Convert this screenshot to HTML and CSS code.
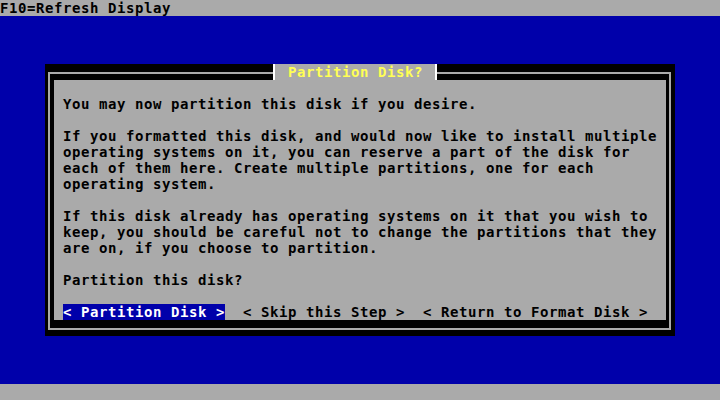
FILE: index.html
```html
<!DOCTYPE html>
<html>
<head>
<meta charset="utf-8">
<link rel="stylesheet" href="styles.css">
</head>
<body>
<div class="screen">
  <div class="bar">F10=Refresh Display</div>
  <div class="desk">
    <div class="dialog">
      <div class="title">Partition Disk?</div>
      <div class="frame">
        <div class="panel">
          <p class="para">You may now partition this disk if you desire.</p>
          <p class="para">If you formatted this disk, and would now like to install multiple
operating systems on it, you can reserve a part of the disk for
each of them here. Create multiple partitions, one for each
operating system.</p>
          <p class="para">If this disk already has operating systems on it that you wish to
keep, you should be careful not to change the partitions that they
are on, if you choose to partition.</p>
          <p class="para">Partition this disk?</p>
          <div class="buttons">
            <span class="btn active">&lt; Partition Disk &gt;</span>
            <span class="btn">&lt; Skip this Step &gt;</span>
            <span class="btn">&lt; Return to Format Disk &gt;</span>
          </div>
        </div>
      </div>
    </div>
  </div>
  <div class="bar"></div>
</div>
</body>
</html>
```
FILE: styles.css
```css
html, body {
  margin: 0;
  padding: 0;
  background: #0000aa;
}
.screen {
  width: 720px;
  height: 400px;
  font-family: "DejaVu Sans Mono", "Liberation Mono", monospace;
  font-weight: bold;
  font-size: 14px;
  letter-spacing: 0.57px;
  line-height: 16px;
  color: #000;
}
.bar {
  height: 16px;
  background: #aaaaaa;
  color: #000;
  white-space: pre;
}
.desk {
  height: 368px;
  box-sizing: border-box;
  background: #0000aa;
  padding: 48px 0 0 45px;
}
.dialog {
  position: relative;
  width: 630px;
  height: 272px;
  box-sizing: border-box;
  background: #000;
  padding: 8px 4px 6px 3px;
}
.frame {
  height: 100%;
  box-sizing: border-box;
  border: 2px solid #aaaaaa;
  padding: 6px 3px 8px 4px;
}
.panel {
  height: 100%;
  box-sizing: border-box;
  background: #aaaaaa;
  padding: 16px 9px 0 9px;
}
.para {
  margin: 0 0 16px 0;
  white-space: pre;
}
.buttons {
  display: flex;
  gap: 18px;
  white-space: pre;
}
.btn {
  height: 16px;
}
.btn.active {
  background: #0000aa;
  color: #ffffff;
}
.title {
  position: absolute;
  left: 228px;
  top: 0;
  height: 16px;
  width: 160px;
  border-left: 2px solid #ffffff;
  border-right: 2px solid #ffffff;
  background: #aaaaaa;
  color: #ffff55;
  padding-left: 13px;
  box-sizing: content-box;
  white-space: pre;
  width: 147px;
}
```
